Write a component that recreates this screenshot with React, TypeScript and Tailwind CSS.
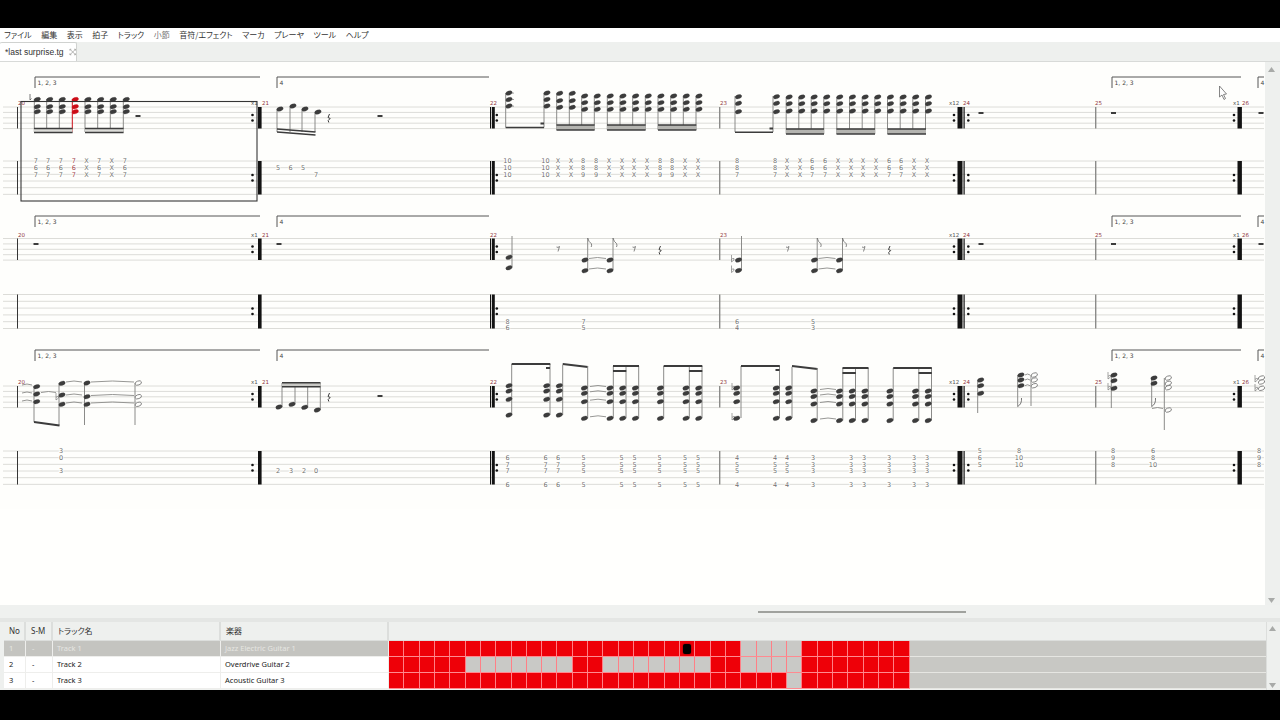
import React from "react";

const MENUS = ["ファイル", "編集", "表示", "拍子", "トラック", "小節", "音符/エフェクト", "マーカ", "プレーヤ", "ツール", "ヘルプ"];

const INK = "#3a3a3a";
const STEM = "#8a8a88";
const LINE = "#dcdcd8";
const MAROON = "#8f2f3a";

function Staff({ y, n, gap }: { y: number; n: number; gap: number }) {
  return (
    <g>
      {Array.from({ length: n }).map((_, i) => (
        <line key={i} x1={3} x2={1264} y1={y + i * gap} y2={y + i * gap} stroke={LINE} strokeWidth={1} />
      ))}
    </g>
  );
}

function Head({ x, y, open, color = INK }: { x: number; y: number; open?: boolean; color?: string }) {
  return (
    <ellipse
      cx={x}
      cy={y}
      rx={3.3}
      ry={2}
      transform={`rotate(-20 ${x} ${y})`}
      fill={open ? "#fffffd" : color}
      stroke={open ? "#777" : color}
      strokeWidth={open ? 0.8 : 0.3}
    />
  );
}

// stem x, stem start and end, heads at hx
function Chord({ sx, y1, y2, hx, ys, open, color }: { sx: number; y1: number; y2: number; hx: number; ys: number[]; open?: boolean; color?: string }) {
  return (
    <g>
      <line x1={sx} x2={sx} y1={y1} y2={y2} stroke={color || STEM} strokeWidth={1} />
      {ys.map((y) => (
        <Head key={y} x={hx} y={y} open={open} color={color} />
      ))}
    </g>
  );
}

function Beam({ x1, x2, y1, y2, w = 1.6 }: { x1: number; x2: number; y1: number; y2?: number; w?: number }) {
  return <line x1={x1} x2={x2} y1={y1} y2={y2 ?? y1} stroke={INK} strokeWidth={w} />;
}

function DoubleBeam({ x1, x2, y, gap = 5, fill = "#b4b4b0" }: { x1: number; x2: number; y: number; gap?: number; fill?: string }) {
  return (
    <g>
      <rect x={x1} y={y} width={x2 - x1} height={gap} fill={fill} />
      <Beam x1={x1} x2={x2} y1={y} />
      <Beam x1={x1} x2={x2} y1={y + gap} />
    </g>
  );
}

function BarRest({ x, y }: { x: number; y: number }) {
  return <rect x={x - 2.5} y={y - 1} width={5} height={2} fill={INK} />;
}

function QuarterRest({ x, y }: { x: number; y: number }) {
  return <path d={`M${x + 0.5} ${y - 4} L${x - 1} ${y - 0.5} L${x + 1.2} ${y + 0.5} L${x - 0.8} ${y + 2.5} L${x - 0.2} ${y + 4.5}`} stroke={INK} strokeWidth={1} fill="none" />;
}

function EighthRest({ x, y }: { x: number; y: number }) {
  return <path d={`M${x - 1.5} ${y - 2} Q${x} ${y - 1} ${x + 1.5} ${y - 2.5} L${x} ${y + 2.5}`} stroke="#666" strokeWidth={0.8} fill="none" />;
}

function Flat({ x, y }: { x: number; y: number }) {
  return <path d={`M${x} ${y - 5} V${y + 2} Q${x + 3.5} ${y} ${x + 2.5} ${y - 1.5} Q${x + 1} ${y - 2} ${x} ${y - 0.5}`} stroke="#666" strokeWidth={0.6} fill="none" />;
}

function Tie({ x1, x2, y, up = true }: { x1: number; x2: number; y: number; up?: boolean }) {
  return <path d={`M${x1} ${y} Q${(x1 + x2) / 2} ${y + (up ? -2 : 2)} ${x2} ${y}`} stroke="#8a8a88" strokeWidth={0.9} fill="none" />;
}

function Flag({ x, y }: { x: number; y: number }) {
  return <path d={`M${x} ${y} Q${x + 1} ${y + 4} ${x + 3.5} ${y + 5.5} Q${x + 4.5} ${y + 7} ${x + 3.5} ${y + 9}`} stroke="#666" strokeWidth={0.8} fill="none" />;
}

function TabCol({ x, top, vals, color = "#707070" }: { x: number; top: number; vals: (string | null)[]; color?: string }) {
  return (
    <g>
      {vals.map((v, i) =>
        v === null ? null : (
          <text
            key={i}
            x={x}
            y={top + i * 6.67 + 2.4}
            textAnchor="middle"
            fill={color}
            stroke="#fffffd"
            strokeWidth={1.6}
            paintOrder="stroke"
            className="text-[6.5px] font-['DejaVu_Sans',sans-serif]"
          >
            {v}
          </text>
        )
      )}
    </g>
  );
}

function Num({ x, y, t, color = MAROON }: { x: number; y: number; t: string; color?: string }) {
  return (
    <text x={x} y={y} fill={color} className="text-[5.5px] font-['DejaVu_Sans',sans-serif]">
      {t}
    </text>
  );
}

function Dots({ x, y }: { x: number; y: number }) {
  return (
    <g fill="#111">
      <circle cx={x} cy={y} r={1.3} />
      <circle cx={x} cy={y + 5.5} r={1.3} />
    </g>
  );
}

function Volta({ y }: { y: number }) {
  const Bracket = ({ x1, x2, label }: { x1: number; x2: number; label: string }) => (
    <g>
      <path d={`M${x1} ${y + 11} V${y} H${x2}`} stroke="#555" strokeWidth={1} fill="none" />
      <text x={x1 + 2.5} y={y + 7.5} fill="#444" className="text-[6px] font-['DejaVu_Sans',sans-serif]">
        {label}
      </text>
    </g>
  );
  return (
    <g>
      <Bracket x1={35} x2={260} label="1, 2, 3" />
      <Bracket x1={277} x2={489} label="4" />
      <Bracket x1={1112} x2={1241} label="1, 2, 3" />
      <Bracket x1={1258} x2={1264} label="4" />
    </g>
  );
}

function Bars({ ny, th, ty, tb }: { ny: number; th: number; ty: number; tb: number }) {
  const both = (x: number, w: number, color: string, key: string) => (
    <g key={key}>
      <rect x={x} y={ny} width={w} height={th} fill={color} />
      <rect x={x} y={ty} width={w} height={tb} fill={color} />
    </g>
  );
  const midN = ny + 8;
  const midT = ty + 14;
  return (
    <g>
      {both(17, 1, "#333", "a")}
      {both(258, 3.6, "#111", "b")}
      {both(490, 1.2, "#111", "c1")}
      {both(492, 2.8, "#111", "c2")}
      {both(719, 1.4, "#8a8a88", "d")}
      {both(957.5, 5, "#111", "e1")}
      {both(963.5, 1.2, "#111", "e2")}
      {both(1095, 1.4, "#8a8a88", "f")}
      {both(1237.5, 4.4, "#111", "g")}
      {[252.5, 496.8, 954, 968.3, 1234].map((x) => (
        <g key={x}>
          <Dots x={x} y={midN} />
          <Dots x={x} y={midT} />
        </g>
      ))}
      <Num x={18} y={ny - 2} t="20" />
      <Num x={251} y={ny - 2} t="x1" color="#555" />
      <Num x={262} y={ny - 2} t="21" />
      <Num x={490} y={ny - 2} t="22" />
      <Num x={720} y={ny - 2} t="23" />
      <Num x={949} y={ny - 2} t="x12" color="#555" />
      <Num x={963} y={ny - 2} t="24" />
      <Num x={1095} y={ny - 2} t="25" />
      <Num x={1233} y={ny - 2} t="x1" color="#555" />
      <Num x={1242} y={ny - 2} t="26" />
    </g>
  );
}

function SystemOne() {
  const m20 = [34.3, 46.7, 59.3, 72.3, 85, 97.7, 110.3, 123.3];
  const m20Tab = ["7", "7", "7", "7", "X", "7", "X", "7"];
  const stems22 = [556.7, 569.3, 581.7, 594.3, 607.3, 620, 632.7, 645.3, 658, 670.7, 683.3, 696];
  const xs22 = [558, 571, 583, 596, 609, 622, 634, 647, 660, 672, 685, 698];
  const pat22 = ["X", "X", "8", "8", "X", "X", "X", "X", "8", "8", "X", "X"];
  const low22 = ["X", "X", "9", "9", "X", "X", "X", "X", "9", "9", "X", "X"];
  const stems23 = stems22.map((x) => x + 229.5);
  const xs23 = xs22.map((x) => x + 229);
  const pat23 = ["X", "X", "6", "6", "X", "X", "X", "X", "6", "6", "X", "X"];
  const low23 = ["X", "X", "7", "7", "X", "X", "X", "X", "7", "7", "X", "X"];
  return (
    <g>
      <Staff y={107} n={5} gap={5.4} />
      <Staff y={161} n={6} gap={6.67} />
      <Volta y={77} />
      <Bars ny={107} th={21.5} ty={161} tb={33.5} />
      {/* bar 20 */}
      {m20.map((x, i) => (
        <Chord key={x} sx={x} y1={99} y2={132} hx={x + 3} ys={[99.5, 106.7, 111.7]} color={i === 3 ? "#cc0a14" : undefined} />
      ))}
      <DoubleBeam x1={34} x2={72.6} y={128.5} gap={4} fill="#dcdcd8" />
      <DoubleBeam x1={85} x2={123.6} y={128.5} gap={4} fill="#dcdcd8" />
      <BarRest x={138} y={116} />
      {m20.map((x, i) => (
        <TabCol key={x} x={x + 1.4} top={161} color={i === 3 ? "#a04048" : undefined} vals={[m20Tab[i], m20Tab[i] === "X" ? "X" : "6", m20Tab[i]]} />
      ))}
      {/* bar 21 */}
      {[
        [277, 109],
        [290, 106],
        [302, 109],
        [315, 112],
      ].map(([x, y]) => (
        <Chord key={x} sx={x} y1={y} y2={132} hx={x + 3} ys={[y]} />
      ))}
      <Beam x1={277} x2={315.5} y1={129} y2={132} />
      <Beam x1={277} x2={315.5} y1={132} y2={135} />
      <QuarterRest x={329} y={118} />
      <BarRest x={380} y={116} />
      <TabCol x={278} top={161} vals={[null, "5"]} />
      <TabCol x={290.5} top={161} vals={[null, "6"]} />
      <TabCol x={303} top={161} vals={[null, "5"]} />
      <TabCol x={316} top={161} vals={[null, null, "7"]} />
      {/* bar 22 */}
      <Chord sx={505.7} y1={93} y2={127.5} hx={509} ys={[93, 99.5, 106]} />
      <Chord sx={544} y1={93} y2={127.5} hx={547} ys={[93, 99.5, 106]} />
      <Beam x1={505.7} x2={544} y1={127.5} />
      <rect x={540.5} y={122.5} width={3.5} height={2} fill={INK} />
      {[513, 513, 513].map((x, i) => (
        <circle key={i} cx={x} cy={93 + i * 6.5} r={0.6} fill="#333" />
      ))}
      {stems22.map((x, i) => {
        const ys = i < 2 ? [93.3, 100.7, 107.3] : [96, 102.7, 109.3];
        return <Chord key={x} sx={x} y1={ys[0]} y2={130} hx={x + 3} ys={ys} />;
      })}
      <DoubleBeam x1={556.5} x2={594.6} y={125} />
      <DoubleBeam x1={607} x2={645.6} y={125} />
      <DoubleBeam x1={658} x2={696.3} y={125} />
      <TabCol x={507.5} top={161} vals={["10", "10", "10"]} />
      <TabCol x={545.5} top={161} vals={["10", "10", "10"]} />
      {xs22.map((x, i) => (
        <TabCol key={x} x={x} top={161} vals={[pat22[i], pat22[i], low22[i]]} />
      ))}
      {/* bar 23 */}
      <Chord sx={735} y1={96} y2={132} hx={738.5} ys={[96.7, 103.3, 111.7]} />
      <Chord sx={773} y1={96} y2={132} hx={776.5} ys={[96.7, 103.3, 111.7]} />
      <Beam x1={735} x2={773} y1={132.3} />
      <rect x={769.5} y={127.5} width={3.5} height={2} fill={INK} />
      {stems23.map((x) => (
        <Chord key={x} sx={x} y1={97} y2={134} hx={x + 3} ys={[97, 103.7, 111]} />
      ))}
      <DoubleBeam x1={786} x2={824} y={129} />
      <DoubleBeam x1={836.5} x2={875} y={129} />
      <DoubleBeam x1={887.5} x2={926} y={129} />
      <TabCol x={737} top={161} vals={["8", "8", "7"]} />
      <TabCol x={775} top={161} vals={["8", "8", "7"]} />
      {xs23.map((x, i) => (
        <TabCol key={x} x={x} top={161} vals={[pat23[i], pat23[i], low23[i]]} />
      ))}
      <BarRest x={981} y={113} />
      <BarRest x={1113.5} y={113} />
      <BarRest x={1261} y={113} />
      {/* selected bar */}
      <rect x={21} y={101.5} width={236} height={99.5} fill="none" stroke="#333" strokeWidth={1.1} />
      <path d="M30 94 V100 L31.5 98.5" stroke="#555" strokeWidth={0.8} fill="none" />
    </g>
  );
}

function SystemTwo() {
  const pair = (off: number, flats: boolean, low: number) => (
    <g>
      <Chord sx={512 + off} y1={236} y2={low + 10} hx={509 + off} ys={[low, low + 10.5]} />
      {flats && <Flat x={731 + off - 229} y={low} />}
      {flats && <Flat x={731 + off - 229} y={low + 10.5} />}
      <EighthRest x={558 + off} y={249} />
      <Chord sx={587.7 + off} y1={238} y2={270} hx={585 + off} ys={[260, 270.7]} />
      <Flag x={587.7 + off} y={238} />
      <Chord sx={613 + off} y1={238} y2={270} hx={610 + off} ys={[260, 270.7]} />
      <Flag x={613 + off} y={238} />
      <Tie x1={589 + off} x2={606 + off} y={258.5} />
      <Tie x1={589 + off} x2={606 + off} y={269} />
      <EighthRest x={634 + off} y={249} />
      <QuarterRest x={660 + off} y={250} />
    </g>
  );
  return (
    <g>
      <Staff y={238.5} n={5} gap={5.4} />
      <Staff y={294.5} n={6} gap={6.8} />
      <Volta y={216} />
      <Bars ny={238.5} th={21.5} ty={294.5} tb={34} />
      <BarRest x={36} y={244} />
      <BarRest x={279} y={244} />
      {pair(0, false, 257.3)}
      {pair(229.5, true, 260)}
      <BarRest x={981} y={244} />
      <BarRest x={1113.5} y={244} />
      <BarRest x={1261} y={244} />
      <TabCol x={507.5} top={294.5} vals={[null, null, null, null, "8", "6"]} />
      <TabCol x={583.5} top={294.5} vals={[null, null, null, null, "7", "5"]} />
      <TabCol x={737} top={294.5} vals={[null, null, null, null, "6", "4"]} />
      <TabCol x={813} top={294.5} vals={[null, null, null, null, "5", "3"]} />
    </g>
  );
}

function SystemThree() {
  const a = [385.7, 391, 399.3, 415];
  const b = [388, 393.3, 401.7, 418.3];
  const c = [391, 396.5, 404, 420.5];
  const top = 451;
  return (
    <g>
      <Staff y={386} n={5} gap={5.4} />
      <Staff y={top} n={6} gap={6.67} />
      <Volta y={350} />
      <Bars ny={386} th={21.5} ty={top} tb={33.5} />
      {/* bar 20 */}
      <Tie x1={22} x2={32} y={385} />
      <Tie x1={22} x2={32} y={393} />
      <Tie x1={22} x2={32} y={401} />
      <Chord sx={34} y1={386} y2={422} hx={36.7} ys={[386.7, 394, 401.7]} />
      <Chord sx={59} y1={383} y2={425.5} hx={62} ys={[383.3, 395, 404.3]} />
      <Flat x={56} y={398} />
      <Chord sx={84.5} y1={383} y2={425} hx={87} ys={[383, 396.7, 404.3]} />
      <Chord sx={135} y1={383} y2={425} hx={138.3} ys={[383, 396.7, 404.3]} open />
      <Beam x1={34} x2={59.5} y1={422} y2={425.5} w={1.8} />
      <Tie x1={41} x2={56} y={392.5} />
      <Tie x1={66} x2={82} y={382} />
      <Tie x1={66} x2={82} y={395} />
      <Tie x1={66} x2={82} y={403} />
      <Tie x1={91} x2={134} y={382} />
      <Tie x1={91} x2={134} y={395.5} />
      <Tie x1={91} x2={134} y={403} />
      <TabCol x={61} top={top} vals={["3", "0", null, "3"]} />
      {/* bar 21 */}
      {[
        [279, 407],
        [292, 404.3],
        [304.7, 407.3],
        [317.3, 410],
      ].map(([x, y]) => (
        <Chord key={x} sx={x + 3} y1={383} y2={y} hx={x} ys={[y]} />
      ))}
      <DoubleBeam x1={282} x2={320.5} y={382.7} gap={4} fill="#c8c8c4" />
      <QuarterRest x={329} y={397} />
      <BarRest x={380} y={396} />
      {[
        [278, "2"],
        [291, "3"],
        [304, "2"],
        [316, "0"],
      ].map(([x, t]) => (
        <TabCol key={x} x={x as number} top={top} vals={[null, null, null, t as string]} />
      ))}
      {/* bar 22 */}
      <Chord sx={511.7} y1={364} y2={415} hx={509} ys={a} />
      <Chord sx={550} y1={364} y2={415} hx={546.7} ys={a} />
      <Chord sx={562.7} y1={365} y2={415} hx={559.3} ys={a} />
      <Beam x1={511.7} x2={550.3} y1={364} w={2} />
      <Beam x1={562.7} x2={588} y1={364} y2={367} w={2} />
      <rect x={546} y={367} width={4} height={2} fill={INK} />
      {[587.7, 613.3, 626, 638.7, 663.7, 689.3, 702].map((x) => (
        <Chord key={x} sx={x} y1={366} y2={418.3} hx={x - 3.3} ys={b} />
      ))}
      <Beam x1={613} x2={639} y1={366} w={2} />
      <Beam x1={613} x2={626.3} y1={371} w={2} />
      <Beam x1={663.7} x2={702.3} y1={366} w={2} />
      <Beam x1={689} x2={702.3} y1={371} w={2} />
      {b.map((y) => (
        <Tie key={y} x1={590} x2={606} y={y - 1.5} />
      ))}
      {[507.5, 545.5, 558].map((x) => (
        <TabCol key={x} x={x} top={top} vals={[null, "6", "7", "7", null, "6"]} />
      ))}
      {[583.5, 621.5, 634.5, 659.5, 685, 698].map((x) => (
        <TabCol key={x} x={x} top={top} vals={[null, "5", "5", "5", null, "5"]} />
      ))}
      {/* bar 23 */}
      <Flat x={732} y={388} />
      <Flat x={732} y={418} />
      <Chord sx={741} y1={366} y2={418} hx={736.7} ys={b} />
      <Chord sx={779.5} y1={366} y2={418} hx={776.2} ys={b} />
      <Chord sx={792} y1={367} y2={418} hx={788.7} ys={b} />
      <Beam x1={741} x2={779.8} y1={366} w={2} />
      <Beam x1={792} x2={817.5} y1={366} y2={369} w={2} />
      <rect x={775.5} y={369} width={4} height={2} fill={INK} />
      {[817.2, 842.8, 855.5, 868.2, 893.2, 918.8, 931.5].map((x) => (
        <Chord key={x} sx={x} y1={368} y2={420.5} hx={x - 3.3} ys={c} />
      ))}
      <Beam x1={842.5} x2={868.5} y1={368} w={2} />
      <Beam x1={842.5} x2={855.8} y1={373} w={2} />
      <Beam x1={893.2} x2={931.8} y1={368} w={2} />
      <Beam x1={918.5} x2={931.8} y1={373} w={2} />
      {c.map((y) => (
        <Tie key={y} x1={820} x2={836} y={y - 1.5} />
      ))}
      {[737, 775, 787].map((x) => (
        <TabCol key={x} x={x} top={top} vals={[null, "4", "5", "5", null, "4"]} />
      ))}
      {[813, 851, 864, 889, 914, 927].map((x) => (
        <TabCol key={x} x={x} top={top} vals={[null, "3", "3", "3", null, "3"]} />
      ))}
      {/* bar 24 */}
      <Chord sx={977.7} y1={380} y2={413} hx={980.7} ys={[380, 385.7, 393.3]} />
      <Chord sx={1017.7} y1={375} y2={406.7} hx={1021} ys={[375, 380, 385.7]} />
      <path d="M1017.7 406.5 Q1022 404 1021.5 398" stroke="#666" strokeWidth={0.9} fill="none" />
      <Chord sx={1031} y1={375} y2={406} hx={1034.3} ys={[375, 380, 385.7]} open />
      <Tie x1={1025} x2={1030} y={375} />
      <Tie x1={1025} x2={1030} y={380} />
      <Tie x1={1025} x2={1030} y={385.7} />
      <TabCol x={979.7} top={top} vals={["5", "6", "5"]} />
      <TabCol x={1019} top={top} vals={["8", "10", "10"]} />
      {/* bar 25 */}
      <Flat x={1108} y={377} />
      <Flat x={1108} y={388} />
      <Chord sx={1111.3} y1={375} y2={408} hx={1114} ys={[375, 380.7, 388.3]} />
      <Chord sx={1151.7} y1={378} y2={406.7} hx={1154} ys={[378, 383.3]} />
      <path d="M1151.7 406.5 Q1156 404 1155.5 398" stroke="#666" strokeWidth={0.9} fill="none" />
      <Tie x1={1152} x2={1163} y={408.5} />
      <Chord sx={1164.3} y1={378} y2={430} hx={1168.3} ys={[378, 383.3, 387.7, 410]} open />
      <TabCol x={1113} top={top} vals={["8", "9", "8"]} />
      <TabCol x={1153} top={top} vals={["6", "8", "10"]} />
      {/* bar 26 */}
      <Flat x={1255} y={380} />
      <Flat x={1255} y={389} />
      <Head x={1261.5} y={378} open />
      <Head x={1261.5} y={382} open />
      <Head x={1261.5} y={388.3} open />
      <TabCol x={1259} top={top} vals={["8", "9", "8"]} />
    </g>
  );
}

function Arrow({ dir }: { dir: "up" | "down" }) {
  return (
    <svg width="7" height="5" viewBox="0 0 7 5">
      <path d={dir === "up" ? "M3.5 0 L7 5 H0 Z" : "M0 0 H7 L3.5 5 Z"} fill="#a8aaa8" />
    </svg>
  );
}

const ROWS: { no: number; name: string; inst: string; gray: number[]; black?: number; selected?: boolean }[] = [
  { no: 1, name: "Track 1", inst: "Jazz Electric Guitar 1", gray: [23, 24, 25, 26], black: 19, selected: true },
  { no: 2, name: "Track 2", inst: "Overdrive Guitar 2", gray: [5, 6, 7, 8, 9, 10, 11, 14, 15, 16, 17, 18, 19, 20, 23, 24, 25, 26] },
  { no: 3, name: "Track 3", inst: "Acoustic Guitar 3", gray: [26] },
];

const CELLS = Array.from({ length: 34 }, (_, i) => i);

function TrackRow({ row }: { row: (typeof ROWS)[number] }) {
  const text = row.selected ? "text-[#e6e6e2] bg-[#c4c4c0]" : "text-[#222] bg-white";
  return (
    <div className="flex h-[16px] shrink-0 leading-[15px]">
      <div className={`w-[22px] border-b border-r border-[#eeeeec] pl-[5px] ${text}`}>{row.no}</div>
      <div className={`w-[27px] border-b border-r border-[#eeeeec] pl-[6px] ${text}`}>-</div>
      <div className={`w-[168px] border-b border-r border-[#eeeeec] pl-[4px] ${text}`}>{row.name}</div>
      <div className={`w-[168px] border-b border-r border-[#eeeeec] pl-[4px] ${text}`}>{row.inst}</div>
      <div className="flex flex-1 border-b border-[#e6e6e2] bg-[#c8c8c4]">
        <div className="flex w-[521px]">
          {CELLS.map((i) => (
            <div
              key={i}
              className={`flex w-[15.32px] items-center justify-center border-r border-r-[#ff7f86] shadow-[0_1px_0_#ff8a90] ${
                row.gray.includes(i) ? "bg-[#c9c9c6]" : "bg-[#ee0008]"
              }`}
            >
              {row.black === i && <div className="h-[10px] w-[8px] rounded-[2px] bg-black shadow-[0_0_2px_#600]" />}
            </div>
          ))}
        </div>
      </div>
    </div>
  );
}

export default function App() {
  return (
    <div className="flex h-[720px] w-[1280px] flex-col overflow-hidden bg-black font-['Noto_Sans','Noto_Sans_CJK_JP',sans-serif]">
      <div className="h-[28px] shrink-0" />
      <div className="flex h-[662px] flex-col overflow-hidden bg-[#eef0ee]">
        {/* Menu */}
        <div className="flex h-[14px] shrink-0 items-center gap-[9.5px] bg-white pl-[4px] text-[8px] text-[#333] font-['Noto_Sans_CJK_JP',sans-serif] [font-feature-settings:'palt']">
          {MENUS.map((m) => (
            <span key={m} className={m === "小節" ? "text-[#777]" : ""}>
              {m}
            </span>
          ))}
        </div>

        {/* Tabs */}
        <div className="flex h-[20px] shrink-0 items-end border-b border-[#d8dad8]">
          <div className="flex h-[19px] w-[77px] items-center gap-[5px] whitespace-nowrap rounded-t-[2px] border-r border-t border-[#d0d2d0] bg-white pl-[5px] text-[8.5px] text-[#333] font-['Liberation_Sans',sans-serif]">
            <span>*last surprise.tg</span>
            <svg width="8" height="8" viewBox="0 0 8 8" fill="none" stroke="#9a9a98" strokeWidth="0.8">
              <path d="M1 1 L7 7 M7 1 L1 7 M1 2.5 V1 H2.5 M5.5 1 H7 V2.5 M7 5.5 V7 H5.5 M2.5 7 H1 V5.5" />
            </svg>
          </div>
        </div>

        {/* Score */}
        <div className="flex h-[543px] shrink-0">
          <svg viewBox="0 62 1265 543" className="h-[543px] w-[1265px] bg-[#fffffd] opacity-[0.99]">
            <SystemOne />
            <SystemTwo />
            <SystemThree />
            <path d="M1219.5 86 V97 L1222 95 L1224 99.5 L1225.5 98.5 L1223.5 94.5 L1226.5 94 Z" fill="#fff" stroke="#666" strokeWidth={0.8} />
          </svg>
          <div className="flex w-[15px] flex-col items-center justify-between pb-[2px] pt-[5px] pr-[3px]">
            <Arrow dir="up" />
            <Arrow dir="down" />
          </div>
        </div>

        {/* Horizontal scrollbar */}
        <div className="flex h-[13px] shrink-0 items-center bg-[#eff1ef] pl-[758px]">
          <div className="h-[2px] w-[208px] bg-[#a0a29e]" />
        </div>
        <div className="h-[4px] shrink-0 bg-[#e4e6e4]" />

        {/* Track table */}
        <div className="flex min-h-0 flex-1 pl-[4px] text-[7.5px] font-['Noto_Sans','Noto_Sans_CJK_JP',sans-serif]">
          <div className="flex w-[1262px] flex-col">
            <div className="flex h-[19px] shrink-0 border-b border-[#dcdedc] text-[8px] leading-[18px] text-[#333] [font-feature-settings:'palt']">
              <div className="w-[22px] border-r-2 border-[#dcdedc] pl-[5px]">No</div>
              <div className="w-[27px] border-r-2 border-[#dcdedc] pl-[5px]">S-M</div>
              <div className="w-[168px] border-r-2 border-[#dcdedc] pl-[5px]">トラック名</div>
              <div className="w-[168px] border-r-2 border-[#dcdedc] pl-[5px]">楽器</div>
              <div className="flex-1" />
            </div>
            <TrackRow row={ROWS[0]} />
            <TrackRow row={ROWS[1]} />
            <TrackRow row={ROWS[2]} />
          </div>
          <div className="flex w-[11px] flex-col items-center justify-between border-l border-[#dcdedc] pb-[2px] pt-[4px]">
            <Arrow dir="up" />
            <Arrow dir="down" />
          </div>
        </div>
      </div>
      <div className="h-[30px] shrink-0" />
    </div>
  );
}
